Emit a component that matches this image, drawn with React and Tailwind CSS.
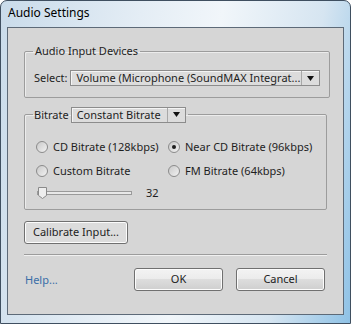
import React from 'react';

const font = { fontFamily: '"Noto Sans", "Open Sans", sans-serif' };

const Radio = ({ checked, label }) => (
  <label className="flex items-center gap-[5px] h-[16px] whitespace-nowrap">
    <span className="w-[12px] h-[12px] shrink-0 rounded-full border border-[#8b8b8b] bg-gradient-to-br from-[#c9c9c9] to-[#f2f2f2] flex items-center justify-center">
      {checked && <span className="w-[4px] h-[4px] rounded-full bg-[#1d1d1d]" />}
    </span>
    <span>{label}</span>
  </label>
);

const Dropdown = ({ value, className }) => (
  <div className={`flex h-[16px] border border-[#8c8c8c] bg-[#dcdcdc] shadow-[inset_1px_1px_0_#f4f4f4] ${className}`}>
    <span className="flex-1 pl-[5px] leading-[14px] whitespace-nowrap overflow-hidden">{value}</span>
    <span className="w-[18px] border-l border-[#a8a8a8] flex items-center justify-center">
      <svg width="7" height="5" viewBox="0 0 7 5"><path d="M0 0h7L3.5 5z" fill="#111" /></svg>
    </span>
  </div>
);

const Button = ({ children, className }) => (
  <button className={`h-[23px] rounded-[3px] border border-[#707070] bg-[linear-gradient(#f3f3f3,#ebebeb_50%,#dddddd_50%,#cfcfcf)] shadow-[inset_0_0_0_1px_#fcfcfc] text-[#222] ${className}`}>
    {children}
  </button>
);

export default function App() {
  return (
    <div style={font} className="w-[351px] h-[324px] rounded-t-[7px] border border-[#3f4f60] bg-[linear-gradient(100deg,#c9dbea_0%,#e4edf5_35%,#f1f6fa_55%,#d6e5f1_80%,#8fc2e6_100%)] text-[11px] text-[#1e1e1e] flex flex-col">
      <div className="h-[26px] pl-[7px] pt-[4px] text-[12px] text-black leading-[16px]">Audio Settings</div>
      <div className="ml-[6px] w-[337px] h-[288px] border border-[#5d6a78] bg-[#d6d6d6] flex flex-col px-[16px]">
        <fieldset className="mt-[16px] w-[303px] border border-[#9c9c9c] rounded-[2px] shadow-[inset_1px_1px_0_#ececec] px-[9px] pt-[12px] pb-[10px]">
          <legend className="-ml-[1px] px-[2px] leading-[14px]">Audio Input Devices</legend>
          <div className="flex items-center gap-[3px]">
            <span>Select:</span>
            <Dropdown value="Volume (Microphone (SoundMAX Integrat..." className="w-[250px]" />
          </div>
        </fieldset>

        <fieldset className="mt-[9px] w-[303px] h-[103px] border border-[#9c9c9c] rounded-[2px] shadow-[inset_1px_1px_0_#ececec] px-[11px] pt-[16px]">
          <legend className="-ml-[3px] pl-[1px] pr-[2px] flex items-center gap-[2px]">
            <span>Bitrate</span>
            <Dropdown value="Constant Bitrate" className="w-[115px]" />
          </legend>
          <div className="grid grid-cols-[132px_1fr] gap-y-[8px]">
            <Radio label="CD Bitrate (128kbps)" />
            <Radio checked label="Near CD Bitrate (96kbps)" />
            <Radio label="Custom Bitrate" />
            <Radio label="FM Bitrate (64kbps)" />
          </div>
          <div className="flex items-center mt-[7px] h-[14px]">
            <div className="relative w-[95px] h-[12px] ml-[1px] flex items-center">
              <div className="w-full h-[4px] border border-[#9a9a9a] bg-[#e8e8e8]" />
              <svg className="absolute left-[1px] top-0" width="9" height="12" viewBox="0 0 9 12">
                <path d="M0.5 0.5h8v8l-4 3l-4-3z" fill="#eeeeee" stroke="#8a8a8a" />
              </svg>
            </div>
            <span className="ml-[14px]">32</span>
          </div>
        </fieldset>

        <Button className="mt-[11px] w-[104px] h-[18px] text-left pl-[8px] leading-[14px] rounded-[1px] bg-[#dcdcdc] bg-none">Calibrate Input...</Button>

        <div className="mt-[10px] h-[2px] w-[303px] border-t border-[#9c9c9c] border-b border-b-[#f0f0f0]" />

        <div className="mt-[12px] flex items-center">
          <span className="text-[#3a6ea8] ml-[1px] mt-[3px]">Help...</span>
          <Button className="ml-auto w-[89px]">OK</Button>
          <Button className="ml-[13px] mr-[2px] w-[89px]">Cancel</Button>
        </div>
      </div>
    </div>
  );
}
